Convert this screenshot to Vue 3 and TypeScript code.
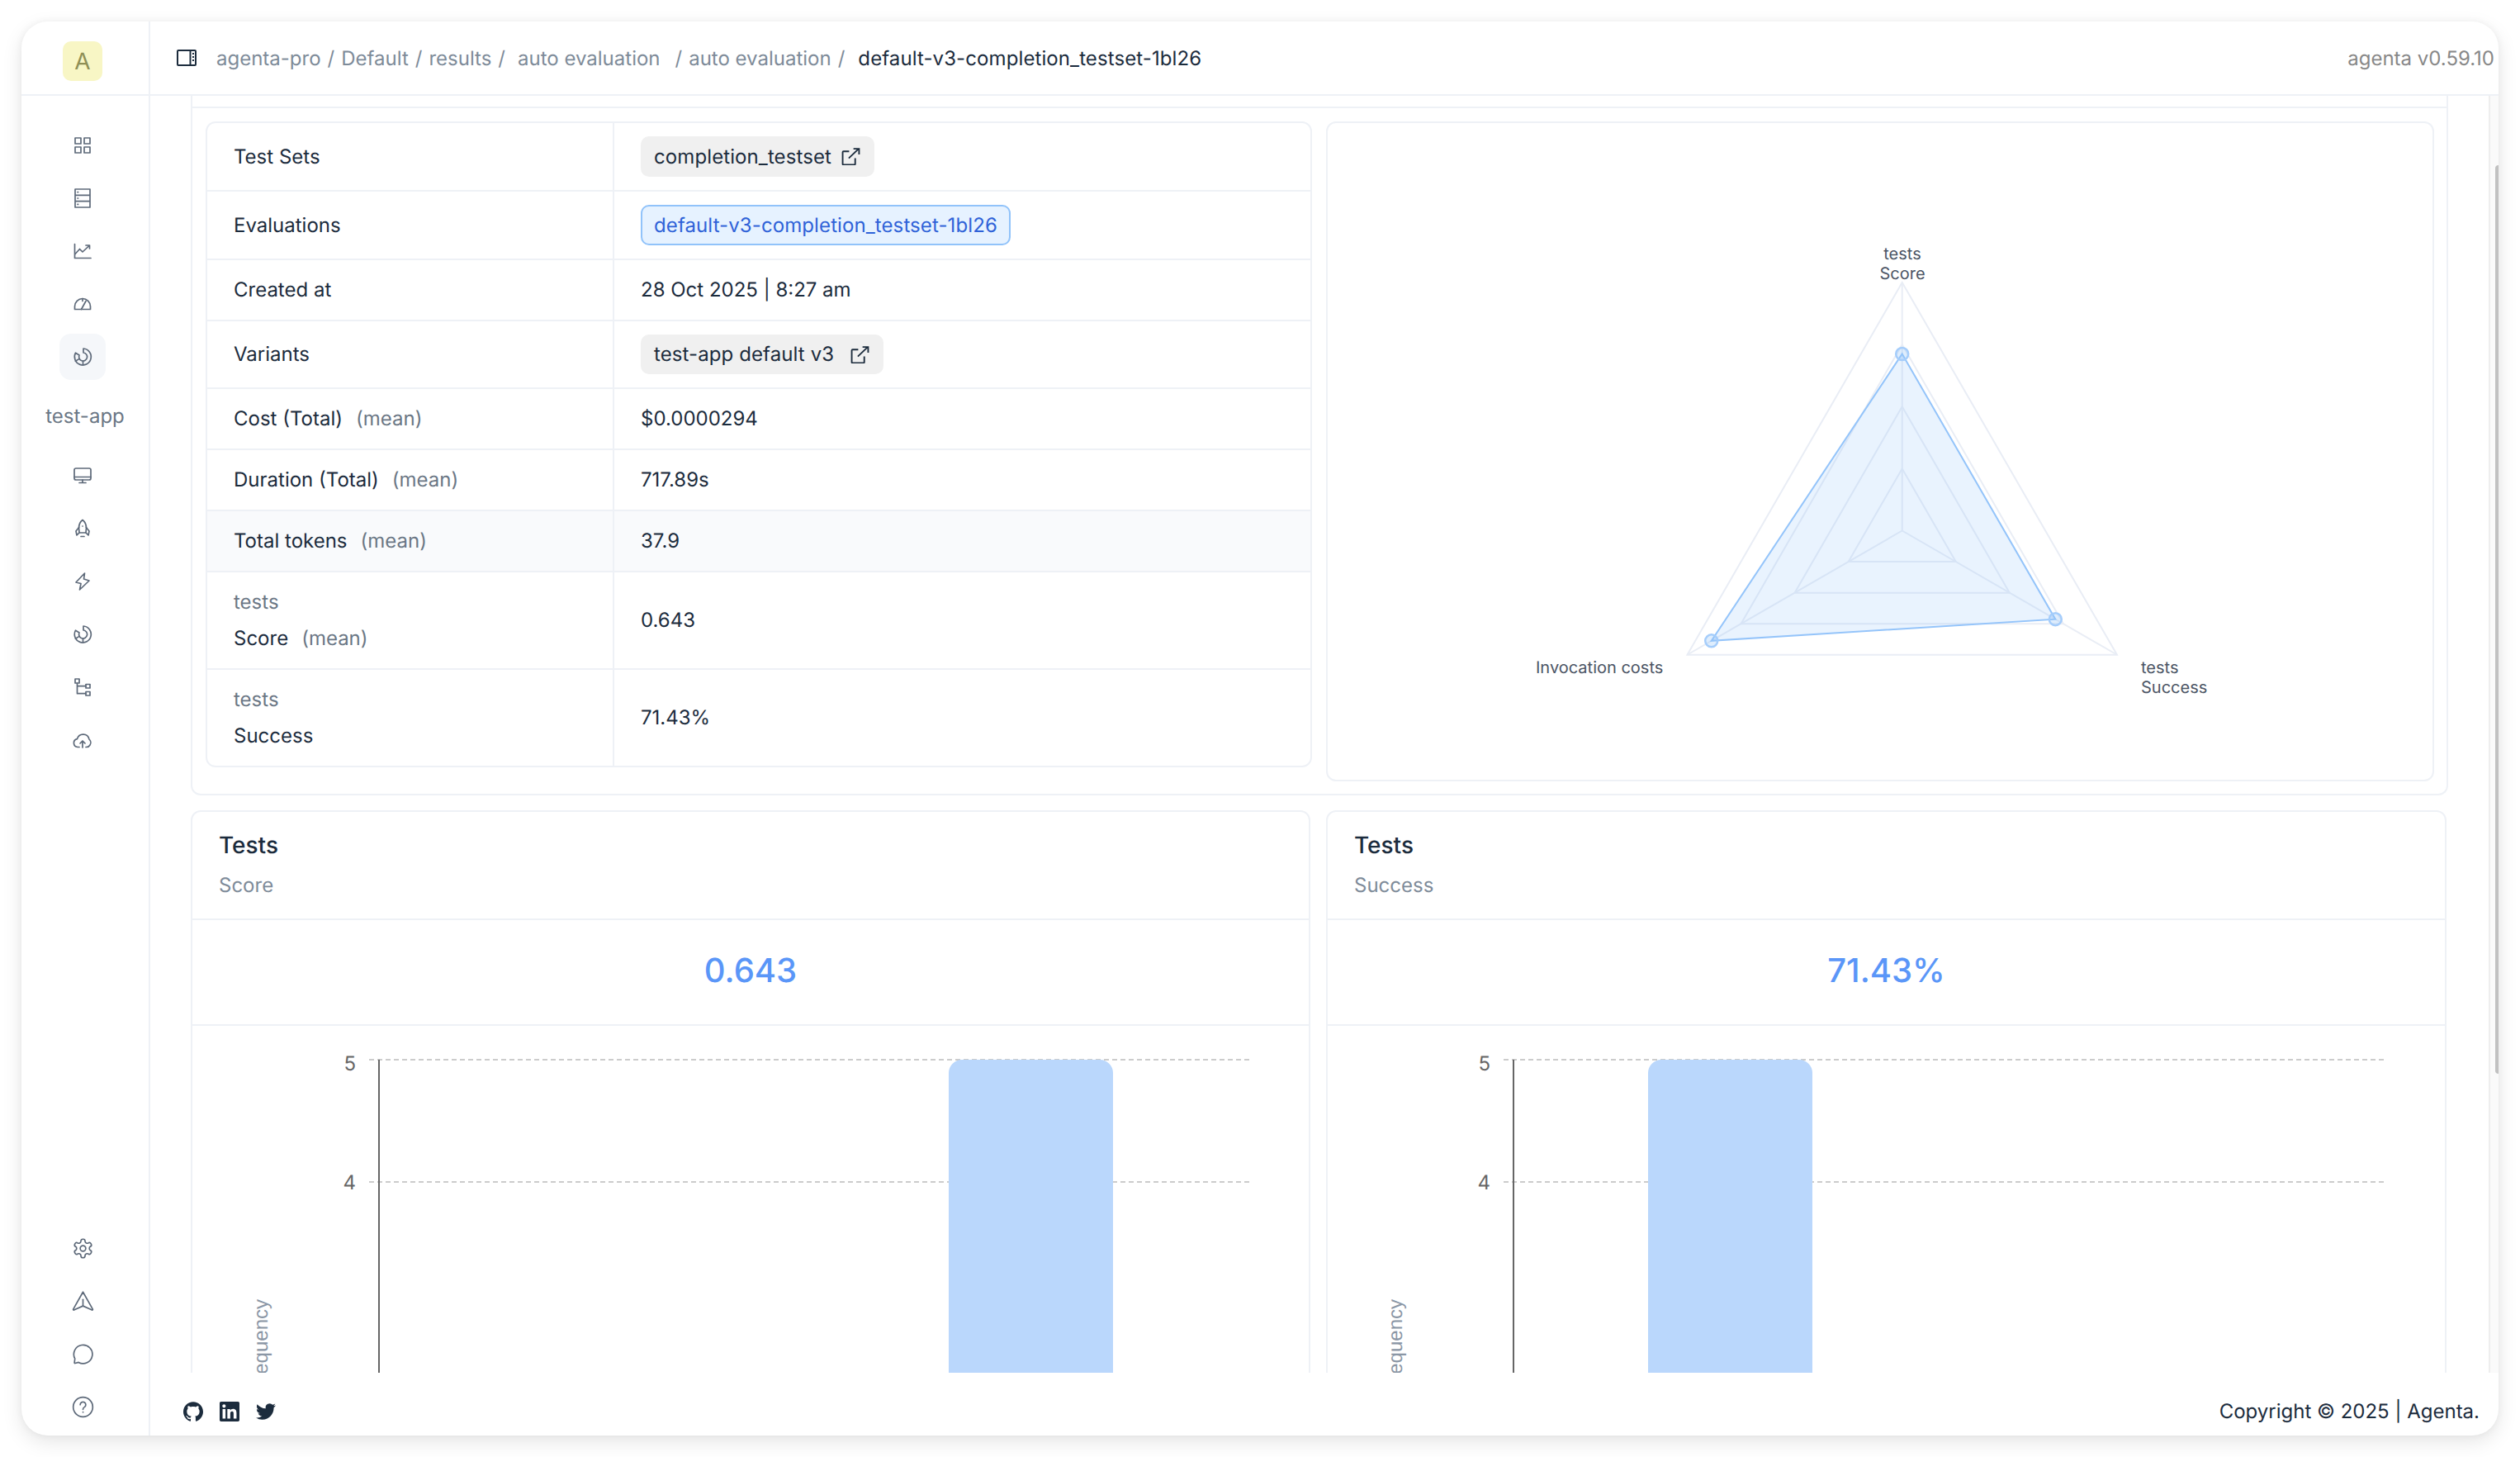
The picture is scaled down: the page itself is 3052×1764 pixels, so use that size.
<template>
  <div class="shell">
    <div class="window">
      <aside class="sidebar">
        <div class="logo-wrap"><div class="logo">A</div></div>
        <nav class="nav">
          <div v-for="item in navTop" :key="item.name" class="nav-item" :class="{ active: item.active }">
            <svg class="ico" viewBox="0 0 24 24"><path v-for="(d, i) in item.paths" :key="i" :d="d" /></svg>
          </div>
          <div class="app-name">test-app</div>
          <div v-for="item in navApp" :key="item.name" class="nav-item">
            <svg class="ico" viewBox="0 0 24 24"><path v-for="(d, i) in item.paths" :key="i" :d="d" /></svg>
          </div>
        </nav>
        <nav class="nav nav-bottom">
          <div v-for="item in navBottom" :key="item.name" class="nav-item">
            <svg class="ico" viewBox="0 0 24 24"><path v-for="(d, i) in item.paths" :key="i" :d="d" /></svg>
          </div>
        </nav>
      </aside>

      <div class="main">
        <header class="topbar">
          <svg class="panel-ico" viewBox="0 0 24 20">
            <path d="M2 1h20a1 1 0 0 1 1 1v16a1 1 0 0 1-1 1H2a1 1 0 0 1-1-1V2a1 1 0 0 1 1-1z" />
            <path d="M16.5 1v18M19 5h2M19 9h2M19 13h2" />
          </svg>
          <div class="crumbs">
            <span>agenta-pro</span><span class="sep">/</span>
            <span>Default</span><span class="sep">/</span>
            <span>results</span><span class="sep">/</span>
            <span class="wide">auto evaluation</span><span class="sep wide">/</span>
            <span>auto evaluation</span><span class="sep">/</span>
            <span class="current">default-v3-completion_testset-1bl26</span>
          </div>
          <div class="version">agenta v0.59.10</div>
        </header>

        <div class="body">
          <div class="content">
            <section class="overview">
              <div class="overview-stub"></div>
              <div class="overview-grid">
                <div class="meta">
                  <div v-for="row in rows" :key="row.label" class="row" :class="{ hl: row.highlight }">
                    <div class="cell">
                      <div v-if="row.over" class="over">{{ row.over }}</div>
                      <div class="label">
                        {{ row.label }}<span v-if="row.suffix" class="suffix">{{ row.suffix }}</span>
                      </div>
                    </div>
                    <div class="cell">
                      <span v-if="row.tag" class="tag" :class="{ wide: row.label === 'Variants' }">
                        {{ row.value }}
                        <svg class="ext" viewBox="0 0 22 20">
                          <path d="M9 4H2.5a1 1 0 0 0-1 1v13.5a1 1 0 0 0 1 1H15a1 1 0 0 0 1-1V12" />
                          <path d="M8.5 12L20 1M14 1h6.5v6.5" />
                        </svg>
                      </span>
                      <span v-else-if="row.link" class="tag link">{{ row.value }}</span>
                      <span v-else>{{ row.value }}</span>
                    </div>
                  </div>
                </div>

                <div class="radar-card">
                  <svg class="radar" viewBox="0 0 1338 795">
                    <polygon v-for="r in rings" :key="r" class="ring" :points="polyAt([r, r, r])" />
                    <line v-for="(p, i) in spokes" :key="i" class="ring" :x1="cx" :y1="cy" :x2="p.x" :y2="p.y" />
                    <polygon class="area" :points="polyAt(dataRadii)" />
                    <circle v-for="(p, i) in dataPoints" :key="i" class="dot" :cx="p.x" :cy="p.y" r="7.5" />
                    <text class="radar-label" x="696" y="165" text-anchor="middle">tests</text>
                    <text class="radar-label" x="696" y="189" text-anchor="middle">Score</text>
                    <text class="radar-label" x="252" y="666">Invocation costs</text>
                    <text class="radar-label" x="985" y="666">tests</text>
                    <text class="radar-label" x="985" y="690">Success</text>
                  </svg>
                </div>
              </div>
            </section>

            <div class="charts">
              <section v-for="c in charts" :key="c.sub" class="chart-card">
                <div class="chart-head">
                  <div class="chart-title">Tests</div>
                  <div class="chart-sub">{{ c.sub }}</div>
                </div>
                <div class="chart-value">{{ c.value }}</div>
                <svg class="chart" viewBox="0 0 1352 520">
                  <line class="grid" :x1="c.axis - 12" y1="41" :x2="c.end" y2="41" />
                  <line class="grid" :x1="c.axis - 12" y1="189" :x2="c.end" y2="189" />
                  <line class="axis" :x1="c.axis" y1="41" :x2="c.axis" y2="520" />
                  <rect class="bar" :x="c.bar" y="41" width="199" height="600" rx="16" />
                  <text class="tick" :x="c.axis - 28" y="54" text-anchor="end">5</text>
                  <text class="tick" :x="c.axis - 28" y="198" text-anchor="end">4</text>
                  <text class="freq" text-anchor="end" :transform="`translate(${c.axis - 135} 331) rotate(-90)`">Frequency</text>
                </svg>
              </section>
            </div>
          </div>
          <div class="gutter"><div class="thumb"></div></div>
        </div>

        <footer class="footer">
          <div class="socials">
            <svg viewBox="0 0 24 24"><path d="M12 .297c-6.63 0-12 5.373-12 12 0 5.303 3.438 9.8 8.205 11.385.6.113.82-.258.82-.577 0-.285-.01-1.04-.015-2.04-3.338.724-4.042-1.61-4.042-1.61C4.422 18.07 3.633 17.7 3.633 17.7c-1.087-.744.084-.729.084-.729 1.205.084 1.838 1.236 1.838 1.236 1.07 1.835 2.809 1.305 3.495.998.108-.776.417-1.305.76-1.605-2.665-.3-5.466-1.332-5.466-5.93 0-1.31.465-2.38 1.235-3.22-.135-.303-.54-1.523.105-3.176 0 0 1.005-.322 3.3 1.23.96-.267 1.98-.399 3-.405 1.02.006 2.04.138 3 .405 2.28-1.552 3.285-1.23 3.285-1.23.645 1.653.24 2.873.12 3.176.765.84 1.23 1.91 1.23 3.22 0 4.61-2.805 5.625-5.475 5.92.42.36.81 1.096.81 2.22 0 1.606-.015 2.896-.015 3.286 0 .315.21.69.825.57C20.565 22.092 24 17.592 24 12.297c0-6.627-5.373-12-12-12" /></svg>
            <svg viewBox="0 0 24 24"><path d="M20.447 20.452h-3.554v-5.569c0-1.328-.027-3.037-1.852-3.037-1.853 0-2.136 1.445-2.136 2.939v5.667H9.351V9h3.414v1.561h.046c.477-.9 1.637-1.85 3.37-1.85 3.601 0 4.267 2.37 4.267 5.455v6.286zM5.337 7.433c-1.144 0-2.063-.926-2.063-2.065 0-1.138.92-2.063 2.063-2.063 1.14 0 2.064.925 2.064 2.063 0 1.139-.925 2.065-2.064 2.065zm1.782 13.019H3.555V9h3.564v11.452zM22.225 0H1.771C.792 0 0 .774 0 1.729v20.542C0 23.227.792 24 1.771 24h20.451C23.2 24 24 23.227 24 22.271V1.729C24 .774 23.2 0 22.222 0h.003z" /></svg>
            <svg viewBox="0 0 24 24"><path d="M23.953 4.57a10 10 0 01-2.825.775 4.958 4.958 0 002.163-2.723c-.951.555-2.005.959-3.127 1.184a4.92 4.92 0 00-8.384 4.482C7.69 8.095 4.067 6.13 1.64 3.162a4.822 4.822 0 00-.666 2.475c0 1.71.87 3.213 2.188 4.096a4.904 4.904 0 01-2.228-.616v.06a4.923 4.923 0 003.946 4.827 4.996 4.996 0 01-2.212.085 4.936 4.936 0 004.604 3.417 9.867 9.867 0 01-6.102 2.105c-.39 0-.779-.023-1.17-.067a13.995 13.995 0 007.557 2.209c9.053 0 13.998-7.496 13.998-13.985 0-.21 0-.42-.015-.63A9.935 9.935 0 0024 4.59z" /></svg>
          </div>
          <div class="copyright">Copyright © 2025 | Agenta.</div>
        </footer>
      </div>
    </div>
  </div>
</template>

<script setup lang="ts">
interface NavItem {
  name: string
  paths: string[]
  active?: boolean
}

interface MetaRow {
  label: string
  value: string
  suffix?: string
  over?: string
  tag?: boolean
  link?: boolean
  highlight?: boolean
}

const donut = [
  'M13 2a10 10 0 1 1-9.5 5.2L8 10a5 5 0 1 0 5-3z',
  'M7.6 14.6l-4.2 2.6M12.5 17v5',
]

const navTop: NavItem[] = [
  { name: 'grid', paths: ['M3 3h7v7H3zM14 3h7v7h-7zM3 14h7v7H3zM14 14h7v7h-7z'] },
  {
    name: 'rows',
    paths: ['M3 1h18v22H3zM3 8.3h18M3 15.7h18', 'M6 4.6h.6M6 12h.6M6 19.4h.6'],
  },
  { name: 'chart', paths: ['M2.5 3.5v17H22', 'M3 15.5l5.5-6 3.5 3.5 8-7.5M16 5h4.5v4'] },
  { name: 'gauge', paths: ['M2.5 18.5V15a9.5 9.5 0 0 1 19 0v3.5z', 'M10.5 18.5L16 8.5M12 5.5v3'] },
  { name: 'donut', paths: donut, active: true },
]

const navApp: NavItem[] = [
  { name: 'desktop', paths: ['M4 3h16a2 2 0 0 1 2 2v10a2 2 0 0 1-2 2H4a2 2 0 0 1-2-2V5a2 2 0 0 1 2-2z', 'M2 13.5h20M12 17v3M8 20.5h8'] },
  {
    name: 'rocket',
    paths: [
      'M12 1.5C8.8 4 7.5 7.5 7.5 11l.5 6h8l.5-6c0-3.5-1.3-7-4.5-9.5z',
      'M7.6 10.5L4 15l1 5 3-3M16.4 10.5L20 15l-1 5-3-3M10 21.5h4M12 9h.1',
    ],
  },
  { name: 'bolt', paths: ['M14.5 2L4 13l6 1.5L8.5 22 20 11l-6.5-2z'] },
  { name: 'donut2', paths: donut },
  {
    name: 'tree',
    paths: ['M3 2h5v5H3zM16 8.5h5V13h-5zM16 17.5h5V22h-5z', 'M5.5 7v12.7H16M5.5 10.7H16'],
  },
  {
    name: 'cloud',
    paths: [
      'M8 20.5H6a5 5 0 0 1-.5-9.9A7.5 7.5 0 0 1 20 11c2 2 2.5 5 1 7-1 1.7-2 2.5-4 2.5h-1',
      'M12 21v-7.5M9 16l3-3 3 3',
    ],
  },
]

const navBottom: NavItem[] = [
  {
    name: 'settings',
    paths: [
      'M12.22 2h-.44a2 2 0 0 0-2 2v.18a2 2 0 0 1-1 1.73l-.43.25a2 2 0 0 1-2 0l-.15-.08a2 2 0 0 0-2.73.73l-.22.38a2 2 0 0 0 .73 2.73l.15.1a2 2 0 0 1 1 1.72v.51a2 2 0 0 1-1 1.74l-.15.09a2 2 0 0 0-.73 2.73l.22.38a2 2 0 0 0 2.73.73l.15-.08a2 2 0 0 1 2 0l.43.25a2 2 0 0 1 1 1.73V20a2 2 0 0 0 2 2h.44a2 2 0 0 0 2-2v-.18a2 2 0 0 1 1-1.73l.43-.25a2 2 0 0 1 2 0l.15.08a2 2 0 0 0 2.73-.73l.22-.39a2 2 0 0 0-.73-2.73l-.15-.08a2 2 0 0 1-1-1.74v-.5a2 2 0 0 1 1-1.74l.15-.09a2 2 0 0 0 .73-2.73l-.22-.38a2 2 0 0 0-2.73-.73l-.15.08a2 2 0 0 1-2 0l-.43-.25a2 2 0 0 1-1-1.73V4a2 2 0 0 0-2-2z',
      'M15 12a3 3 0 1 1-6 0 3 3 0 0 1 6 0z',
    ],
  },
  {
    name: 'send',
    paths: ['M12 2l10.5 18.5a.6.6 0 0 1-.8.8L12 17l-9.7 4.3a.6.6 0 0 1-.8-.8z', 'M12 17v-7'],
  },
  { name: 'chat', paths: ['M7.2 20.8l-3.7 1a.6.6 0 0 1-.7-.8l.5-4.2A10 10 0 1 1 7.2 20.8z'] },
  {
    name: 'help',
    paths: [
      'M22.5 12a10.5 10.5 0 1 1-21 0 10.5 10.5 0 0 1 21 0z',
      'M9 9.5a3 3 0 1 1 4.5 2.6c-1 .6-1.5 1.2-1.5 2.4M12 17.5h.1',
    ],
  },
]

const rows: MetaRow[] = [
  { label: 'Test Sets', value: 'completion_testset', tag: true },
  { label: 'Evaluations', value: 'default-v3-completion_testset-1bl26', link: true },
  { label: 'Created at', value: '28 Oct 2025 | 8:27 am' },
  { label: 'Variants', value: 'test-app default v3', tag: true },
  { label: 'Cost (Total)', suffix: '(mean)', value: '$0.0000294' },
  { label: 'Duration (Total)', suffix: '(mean)', value: '717.89s' },
  { label: 'Total tokens', suffix: '(mean)', value: '37.9', highlight: true },
  { label: 'Score', over: 'tests', suffix: '(mean)', value: '0.643' },
  { label: 'Success', over: 'tests', value: '71.43%' },
]

// radar geometry, in the coordinates of the card
const cx = 695.7
const cy = 493.5
const radius = 300.5
const angles = [-90, 30, 150].map((a) => (a * Math.PI) / 180)
const rings = [0.25, 0.5, 0.75, 1].map((f) => f * radius)
const dataRadii = [214, 214.3, 266.7]

const pointsAt = (radii: number[]) =>
  angles.map((a, i) => ({ x: cx + radii[i] * Math.cos(a), y: cy + radii[i] * Math.sin(a) }))
const polyAt = (radii: number[]) =>
  pointsAt(radii)
    .map((p) => `${p.x},${p.y}`)
    .join(' ')

const spokes = pointsAt([radius, radius, radius])
const dataPoints = pointsAt(dataRadii)

const charts = [
  { sub: 'Score', value: '0.643', axis: 226, end: 1280, bar: 916 },
  { sub: 'Success', value: '71.43%', axis: 225, end: 1279, bar: 388 },
]
</script>

<style>
html,
body {
  margin: 0;
  background: #fff;
}
</style>

<style scoped>
.shell {
  box-sizing: border-box;
  width: 3052px;
  height: 1764px;
  padding: 26px;
  font-family: Inter, 'Noto Sans', sans-serif;
  font-size: 24px;
  color: #1c2c3d;
  overflow: hidden;
  text-rendering: geometricPrecision;
}

.window {
  display: flex;
  height: 100%;
  background: #fff;
  border-radius: 32px;
  overflow: hidden;
  box-shadow: 0 8px 24px rgba(0, 0, 0, 0.1), 0 0 10px rgba(0, 0, 0, 0.05);
}

.sidebar {
  flex: none;
  width: 156px;
  box-sizing: border-box;
  display: flex;
  flex-direction: column;
  border-right: 2px solid #eef1f6;
}

.logo-wrap {
  height: 90px;
  padding: 24px 0 0 50px;
  box-sizing: border-box;
  border-bottom: 2px solid #eef1f6;
  flex: none;
}

.logo {
  width: 48px;
  height: 48px;
  background: #f8f6c5;
  border-radius: 10px;
  color: #8f8f55;
  font-size: 28px;
  line-height: 48px;
  text-align: center;
}

.nav {
  display: flex;
  flex-direction: column;
  padding-top: 28px;
}

.nav-bottom {
  margin-top: auto;
  padding-top: 0;
  padding-bottom: 3px;
}

.nav-item {
  width: 56px;
  height: 56px;
  margin: 4px 0 4px 46px;
  display: flex;
  align-items: center;
  justify-content: center;
  border-radius: 14px;
}

.nav-item.active {
  background: #f5f7fa;
}

.ico {
  width: 24px;
  height: 24px;
  fill: none;
  stroke: #5d6979;
  stroke-width: 1.7;
  stroke-linecap: round;
  stroke-linejoin: round;
}

.nav-bottom .ico {
  width: 27px;
  height: 27px;
  stroke-width: 1.5;
}

.app-name {
  margin: 18px 0;
  height: 44px;
  line-height: 44px;
  text-align: center;
  font-size: 24px;
  color: #6b7785;
}

.main {
  flex: 1;
  min-width: 0;
  display: flex;
  flex-direction: column;
}

.topbar {
  flex: none;
  height: 90px;
  box-sizing: border-box;
  display: flex;
  align-items: center;
  padding: 0 5px 0 32px;
  border-bottom: 2px solid #eef1f6;
}

.panel-ico {
  width: 24px;
  height: 20px;
  margin-right: 24px;
  fill: none;
  stroke: #1c2c3d;
  stroke-width: 2;
}

.crumbs {
  flex: 1;
  display: flex;
  color: #7e8b99;
  white-space: nowrap;
}

.sep {
  margin: 0 8px;
}

.crumbs > .wide {
  margin-left: 7px;
}

.crumbs > .sep.wide {
  margin-left: 18px;
  margin-right: 8px;
}

.current {
  color: #1c2c3d;
  margin-left: 8px;
  letter-spacing: 0.1px;
}

.version {
  color: #888;
}

.body {
  flex: 1;
  min-height: 0;
  display: flex;
}

.content {
  flex: 1;
  min-width: 0;
  padding: 0 49px;
  overflow: hidden;
}

.gutter {
  flex: none;
  width: 12px;
  box-sizing: border-box;
  position: relative;
  background: #fafafa;
  border-left: 2px solid #eeeeee;
}

.thumb {
  position: absolute;
  right: 0;
  top: 84px;
  width: 4px;
  height: 1100px;
  background: #c1c1c1;
  border-radius: 4px 0 0 4px;
}

.overview {
  border: 2px solid #eef1f6;
  border-top: none;
  border-radius: 0 0 12px 12px;
}

.overview-stub {
  height: 13px;
  border-bottom: 2px solid #eef1f6;
}

.overview-grid {
  display: grid;
  grid-template-columns: 1340px 1342px;
  gap: 17px;
  align-items: start;
  padding: 16px 16px 15px 16px;
}

.meta {
  border: 2px solid #eef1f6;
  border-radius: 12px;
  overflow: hidden;
}

.row {
  display: grid;
  grid-template-columns: 491px 1fr;
  border-bottom: 2px solid #eef1f6;
}

.row:last-child {
  border-bottom: none;
}

.row.hl {
  background: #f9fafc;
}

.cell {
  padding: 14px 32px;
  line-height: 44px;
  min-height: 44px;
  display: flex;
  flex-direction: column;
  justify-content: center;
  align-items: flex-start;
}

.cell + .cell {
  border-left: 2px solid #eef1f6;
}

.over {
  color: #6b7785;
}

.suffix {
  color: #6b7785;
  margin-left: 16px;
}

.tag {
  display: inline-flex;
  align-items: center;
  box-sizing: border-box;
  height: 49px;
  margin: 2px 0;
  padding: 0 17px 0 16px;
  border-radius: 10px;
  background: #f0f0f0;
  letter-spacing: 0.1px;
}

.tag.wide {
  height: 48px;
}

.tag.wide .ext {
  margin-left: 20px;
}

.tag.link {
  background: #e6f2ff;
  border: 2px solid #91c3fa;
  color: #2f62d8;
  padding: 0 14px;
}

.ext {
  width: 23px;
  height: 21px;
  margin-left: 12px;
  fill: none;
  stroke: #1c2c3d;
  stroke-width: 1.8;
}

.radar-card {
  height: 799px;
  box-sizing: border-box;
  border: 2px solid #eef1f6;
  border-radius: 12px;
}

.radar {
  display: block;
  width: 1338px;
  height: 795px;
}

.ring {
  fill: none;
  stroke: #e9edf5;
  stroke-width: 2;
}

.area {
  fill: rgba(145, 195, 250, 0.2);
  stroke: #94c4fa;
  stroke-width: 2;
}

.dot {
  fill: rgba(145, 195, 250, 0.3);
  stroke: #a5cdfb;
  stroke-width: 2.5;
}

.radar-label {
  font-size: 20px;
  fill: #4b5565;
}

.charts {
  display: grid;
  grid-template-columns: 1356px 1357px;
  gap: 19px;
  margin-top: 18px;
}

.chart-card {
  border: 2px solid #eef1f6;
  border-radius: 12px;
}

.chart-head {
  box-sizing: border-box;
  height: 131px;
  padding: 18px 32px 0;
  border-bottom: 2px solid #eef1f6;
}

.chart-title {
  font-size: 28px;
  font-weight: 500;
  line-height: 44px;
}

.chart-sub {
  margin-top: 5px;
  line-height: 44px;
  color: #7e8b99;
}

.chart-value {
  box-sizing: border-box;
  height: 128px;
  line-height: 122px;
  text-align: center;
  font-size: 40px;
  font-weight: 500;
  color: #5a96f8;
  border-bottom: 2px solid #eef1f6;
}

.chart {
  display: block;
  width: 1352px;
  height: 520px;
}

.grid {
  stroke: #cccccc;
  stroke-width: 2;
  stroke-dasharray: 6 4;
}

.axis {
  stroke: #666666;
  stroke-width: 2;
}

.bar {
  fill: #bad7fc;
}

.tick {
  font-size: 24px;
  fill: #666666;
}

.freq {
  font-family: 'Liberation Sans', Arial, sans-serif;
  font-size: 24px;
  fill: #8a96a5;
}

.footer {
  flex: none;
  height: 76px;
  box-sizing: border-box;
  display: flex;
  align-items: center;
  justify-content: space-between;
  padding: 17px 23px 0 40px;
}

.socials {
  display: flex;
  gap: 20px;
}

.socials svg {
  width: 24px;
  height: 24px;
  fill: #1c2c3d;
}

.copyright {
  white-space: nowrap;
}
</style>
